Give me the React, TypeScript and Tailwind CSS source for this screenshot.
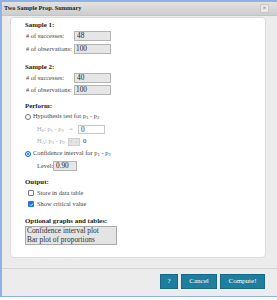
import React from "react";

const serif = { fontFamily: '"Liberation Serif", "Times New Roman", serif' };

function Radio({ checked }: { checked?: boolean }) {
  return checked ? (
    <span className="shrink-0 inline-block w-[6px] h-[6px] rounded-full bg-[#1a73e8] border border-[#1a73e8] shadow-[inset_0_0_0_1px_#fff] mr-[2px]" />
  ) : (
    <span className="shrink-0 inline-block w-[6px] h-[6px] rounded-full bg-white border border-[#767676] mr-[2px]" />
  );
}

function Check({ checked }: { checked?: boolean }) {
  return checked ? (
    <span className="shrink-0 inline-flex items-center justify-center w-[6px] h-[6px] rounded-[1px] bg-[#1a73e8] mr-[3px]">
      <svg width="5" height="5" viewBox="0 0 10 10">
        <path d="M2 5.2 L4.2 7.4 L8.2 2.8" stroke="#fff" strokeWidth="1.8" fill="none" />
      </svg>
    </span>
  ) : (
    <span className="shrink-0 inline-block w-[6px] h-[6px] rounded-[1px] bg-white border border-[#767676] mr-[3px]" />
  );
}

function P12() {
  return (
    <span>
      p<sub>1</sub> - p<sub>2</sub>
    </span>
  );
}

export default function App() {
  return (
    <div className="w-[277px] h-[300px] bg-white overflow-hidden text-[#222] whitespace-nowrap" style={serif}>
      <div className="h-[297px] border-l-2 border-t-2 border-b-[1.5px] border-[#8fb2e6] bg-[#ececec] flex flex-col">
        {/* title bar */}
        <div className="h-[14px] bg-gradient-to-b from-[#e2e2e2] to-[#cdcdcd] border-b border-[#c4c4c4] flex items-center justify-between pl-[2px] pr-[8px]">
          <span className="text-[6.3px] font-bold leading-none">Two Sample Prop. Summary</span>
          <span className="w-[9px] h-[9px] bg-[#e9e9e9] border border-[#c8c8c8] rounded-[1px] flex items-center justify-center text-[7px] leading-none text-[#555]">
            ×
          </span>
        </div>

        {/* body */}
        <div className="flex-1 pl-[8px] pr-[11px] pt-[1px]">
          <div className="h-[241px] bg-white border border-[#dcdcdc] rounded-[4px] pl-[14px] pt-[3px] text-[6.4px] leading-none">
            {/* Sample 1 */}
            <div className="h-[9px] flex items-center font-bold text-[6.9px]">Sample 1:</div>
            <div className="mt-[1px] h-[10px] flex items-center">
              <span className="w-[49px] shrink-0 pl-[1px] text-[#444]"># of successes:</span>
              <span className="shrink-0 w-[37px] h-[10px] bg-[#e6e6e6] border border-[#b4b4b4] text-[7.3px] flex items-center pl-[2px]">48</span>
            </div>
            <div className="mt-[3px] h-[10px] flex items-center">
              <span className="w-[49px] shrink-0 pl-[1px] text-[#444]"># of observations:</span>
              <span className="shrink-0 w-[37px] h-[10px] bg-[#e6e6e6] border border-[#b4b4b4] text-[7.3px] flex items-center pl-[1px]">100</span>
            </div>

            {/* Sample 2 */}
            <div className="mt-[9px] h-[9px] flex items-center font-bold text-[6.9px]">Sample 2:</div>
            <div className="mt-[1px] h-[10px] flex items-center">
              <span className="w-[49px] shrink-0 pl-[1px] text-[#444]"># of successes:</span>
              <span className="shrink-0 w-[37px] h-[10px] bg-[#e6e6e6] border border-[#b4b4b4] text-[7.3px] flex items-center pl-[2px]">40</span>
            </div>
            <div className="mt-[2px] h-[10px] flex items-center">
              <span className="w-[49px] shrink-0 pl-[1px] text-[#444]"># of observations:</span>
              <span className="shrink-0 w-[37px] h-[10px] bg-[#e6e6e6] border border-[#b4b4b4] text-[7.3px] flex items-center pl-[1px]">100</span>
            </div>

            {/* Perform */}
            <div className="mt-[7px] h-[9px] flex items-center font-bold text-[6.9px]">Perform:</div>
            <div className="mt-[1px] h-[9px] flex items-center">
              <Radio />
              <span className="text-[#444]">
                Hypothesis test for <P12 />
              </span>
            </div>
            <div className="mt-[4px] h-[9px] flex items-center pl-[12px] text-[#aaa]">
              <span className="w-[27px] shrink-0">
                H<sub>0</sub>: <P12 />
              </span>
              <span className="w-[14px] shrink-0 text-center">=</span>
              <span className="shrink-0 w-[27px] h-[9px] bg-white border border-[#c8c8c8] text-[#333] text-[7.3px] flex items-center pl-[2px]">0</span>
            </div>
            <div className="mt-[3px] h-[9px] flex items-center pl-[12px] text-[#aaa]">
              <span className="w-[31px] shrink-0">
                H<sub>A</sub>: <P12 />
              </span>
              <span className="shrink-0 w-[12px] h-[8px] bg-[#e4e4e4] border border-[#d0d0d0] text-[#c4c4c4] flex items-center justify-center text-[5.5px]">≠ ⌄</span>
              <span className="ml-[3px] text-[#333] text-[7px]">0</span>
            </div>
            <div className="mt-[3px] h-[9px] flex items-center">
              <Radio checked />
              <span className="text-[#444]">
                Confidence interval for <P12 />
              </span>
            </div>
            <div className="mt-[3px] h-[10px] flex items-center pl-[12px]">
              <span className="w-[16px] shrink-0 text-[#444]">Level:</span>
              <span className="shrink-0 w-[24px] h-[10px] bg-[#e6e6e6] border border-[#b4b4b4] text-[7.3px] flex items-center pl-[2px]">0.90</span>
            </div>

            {/* Output */}
            <div className="mt-[7px] h-[9px] flex items-center font-bold text-[6.9px]">Output:</div>
            <div className="mt-[1px] h-[10px] flex items-center pl-[3px]">
              <Check />
              <span className="text-[#444]">Store in data table</span>
            </div>
            <div className="mt-[1px] h-[10px] flex items-center pl-[3px]">
              <Check checked />
              <span className="text-[#444]">Show critical value</span>
            </div>

            {/* Optional */}
            <div className="mt-[8px] h-[9px] flex items-center font-bold text-[6.9px]">Optional graphs and tables:</div>
            <div className="w-[92px] h-[19px] bg-[#e4e4e4] border border-[#aaa] text-[7.4px] leading-[8.5px] pl-[1px] text-[#333]">
              <div>Confidence interval plot</div>
              <div>Bar plot of proportions</div>
            </div>
          </div>
        </div>

        {/* footer */}
        <div className="h-[28px] border-t border-[#d4d4d4] flex items-start justify-end pr-[12px] pt-[5px] gap-[3px]">
          <button className="w-[18px] h-[15px] bg-[#1f7d9d] border border-[#176a86] text-white text-[7px] leading-none" style={serif}>?</button>
          <button className="w-[36px] h-[15px] bg-[#1f7d9d] border border-[#176a86] text-white text-[7px] leading-none" style={serif}>Cancel</button>
          <button className="w-[45px] h-[15px] bg-[#1f7d9d] border border-[#176a86] text-white text-[7px] leading-none" style={serif}>Compute!</button>
        </div>
      </div>
    </div>
  );
}
